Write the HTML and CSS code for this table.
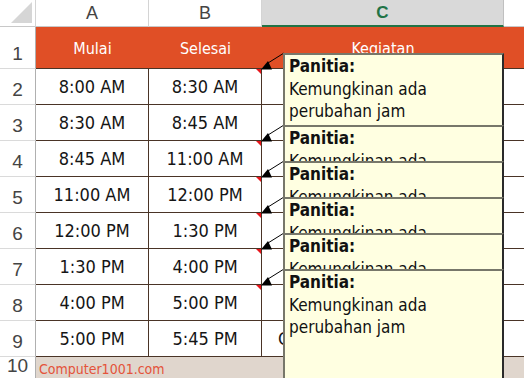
FILE: index.html
```html
<!DOCTYPE html>
<html>
<head>
<meta charset="utf-8">
<link rel="stylesheet" href="styles.css">
</head>
<body>
<div class="sheet">
  <div class="corner"><svg width="35" height="26" viewBox="0 0 35 26"><polygon points="11,23 32,23 32,2" fill="#d6d6d6"/></svg></div>
  <div class="colhead">A</div>
  <div class="colhead">B</div>
  <div class="colhead sel">C</div>
  <div class="colhead last"></div>

  <div class="rowhead">1</div>
  <div class="title">Mulai</div>
  <div class="title">Selesai</div>
  <div class="title">Kegiatan</div>
  <div class="title"></div>

  <div class="rowhead">2</div>
  <div class="cell">8:00 AM</div>
  <div class="cell note">8:30 AM</div>
  <div class="cell wide"></div>
  <div class="cell rest"></div>

  <div class="rowhead">3</div>
  <div class="cell">8:30 AM</div>
  <div class="cell">8:45 AM</div>
  <div class="cell wide"></div>
  <div class="cell rest"></div>

  <div class="rowhead">4</div>
  <div class="cell">8:45 AM</div>
  <div class="cell note">11:00 AM</div>
  <div class="cell wide"></div>
  <div class="cell rest"></div>

  <div class="rowhead">5</div>
  <div class="cell">11:00 AM</div>
  <div class="cell note">12:00 PM</div>
  <div class="cell wide"></div>
  <div class="cell rest"></div>

  <div class="rowhead">6</div>
  <div class="cell">12:00 PM</div>
  <div class="cell note">1:30 PM</div>
  <div class="cell wide"></div>
  <div class="cell rest"></div>

  <div class="rowhead">7</div>
  <div class="cell">1:30 PM</div>
  <div class="cell note">4:00 PM</div>
  <div class="cell wide"></div>
  <div class="cell rest"></div>

  <div class="rowhead">8</div>
  <div class="cell">4:00 PM</div>
  <div class="cell note">5:00 PM</div>
  <div class="cell wide"></div>
  <div class="cell rest"></div>

  <div class="rowhead">9</div>
  <div class="cell">5:00 PM</div>
  <div class="cell">5:45 PM</div>
  <div class="cell wide text">Closing / Penutupan</div>
  <div class="cell rest"></div>

  <div class="rowhead">10</div>
  <div class="footer">Computer1001.com</div>

  <svg class="arrows" width="524" height="381" viewBox="0 0 524 381">
    <g stroke="#000" stroke-width="1">
      <line x1="284" y1="53" x2="268" y2="63"/>
      <line x1="284" y1="125" x2="268" y2="135"/>
      <line x1="284" y1="161" x2="268" y2="171"/>
      <line x1="284" y1="197" x2="268" y2="207"/>
      <line x1="284" y1="233" x2="268" y2="243"/>
      <line x1="284" y1="269" x2="268" y2="279"/>
    </g>
    <g fill="#000">
      <polygon points="261,69.5 272,69.5 268,61"/>
      <polygon points="261,141.5 272,141.5 268,133"/>
      <polygon points="261,177.5 272,177.5 268,169"/>
      <polygon points="261,213.5 272,213.5 268,205"/>
      <polygon points="261,249.5 272,249.5 268,241"/>
      <polygon points="261,285.5 272,285.5 268,277"/>
    </g>
  </svg>

  <div class="comment c1"><b>Panitia:</b><br>Kemungkinan ada perubahan jam</div>
  <div class="comment c2"><b>Panitia:</b><br>Kemungkinan ada perubahan jam</div>
  <div class="comment c3"><b>Panitia:</b><br>Kemungkinan ada perubahan jam</div>
  <div class="comment c4"><b>Panitia:</b><br>Kemungkinan ada perubahan jam</div>
  <div class="comment c5"><b>Panitia:</b><br>Kemungkinan ada perubahan jam</div>
  <div class="comment c6"><b>Panitia:</b><br>Kemungkinan ada perubahan jam</div>
</div>
</body>
</html>
```

FILE: styles.css
```css
html, body {
  margin: 0;
  padding: 0;
  background: #fff;
  overflow: hidden;
}

.sheet {
  position: relative;
  width: 524px;
  height: 378px;
  overflow: hidden;
  display: grid;
  grid-template-columns: 36px 113px 113px 242px 20px;
  grid-template-rows: 27px 42px repeat(8, 36px) 24px;
  font-family: "DejaVu Sans Condensed", "DejaVu Sans", sans-serif;
  font-stretch: condensed;
}

.sheet > div {
  box-sizing: border-box;
}

.corner {
  border-right: 1px solid #d4d4d4;
  border-bottom: 1px solid #c8c8c8;
}
.corner svg { display: block; }

.colhead {
  display: flex;
  align-items: center;
  justify-content: center;
  border-right: 1px solid #d4d4d4;
  border-bottom: 1px solid #c8c8c8;
  font-family: "Liberation Sans", Arial, sans-serif;
  font-size: 18px;
  color: #444;
  background: #fff;
}
.colhead.sel {
  background: #d9d9d9;
  color: #217346;
  font-weight: bold;
  font-size: 17px;
  border-bottom: 2px solid #217346;
  border-right: 1px solid #c0c0c0;
}
.colhead.last { border-right: none; }

.rowhead {
  display: flex;
  align-items: flex-end;
  justify-content: center;
  padding-bottom: 3px;
  border-right: 1px solid #b0b0b0;
  border-bottom: 1px solid #dadada;
  font-family: "Liberation Sans", Arial, sans-serif;
  font-size: 19px;
  color: #444;
  background: #fff;
}

.title {
  display: flex;
  align-items: center;
  justify-content: center;
  background: #e04f26;
  color: #fff;
  font-size: 16px;
  border-bottom: 1px solid #4a3426;
  padding-top: 1px;
}

.cell {
  position: relative;
  display: flex;
  align-items: center;
  justify-content: center;
  font-size: 18px;
  color: #151515;
  border-right: 1px solid #4a3426;
  border-bottom: 1px solid #4a3426;
}
.cell.rest { border-right: none; }
.cell.text { justify-content: flex-start; padding-left: 16px; white-space: nowrap; overflow: hidden; }

.cell.note::after {
  content: "";
  position: absolute;
  top: 0;
  right: 0;
  border-top: 5px solid #e8141a;
  border-left: 5px solid transparent;
}

.footer {
  grid-column: 2 / span 4;
  background: #e0d6cd;
  color: #e4533a;
  font-size: 14px;
  padding: 4px 0 0 3px;
}

.arrows {
  position: absolute;
  left: 0;
  top: 0;
  pointer-events: none;
}

.comment {
  position: absolute;
  left: 283px;
  width: 221px;
  height: 132px;
  box-sizing: border-box;
  background: #ffffe1;
  border: 2px solid #77776a;
  border-right-color: #2a2a2a;
  padding: 0 8px 0 4px;
  font-size: 17px;
  line-height: 22.5px;
  color: #111;
}
.comment b { font-weight: bold; }

.c1 { top: 53px; }
.c2 { top: 125px; }
.c3 { top: 161px; }
.c4 { top: 197px; }
.c5 { top: 233px; }
.c6 { top: 269px; }
```
